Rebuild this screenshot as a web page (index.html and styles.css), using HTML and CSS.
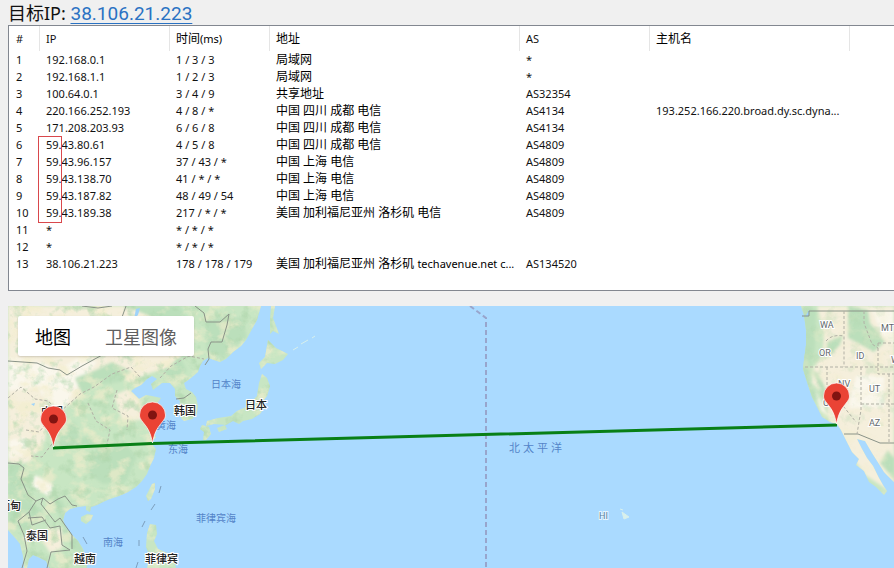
FILE: index.html
```html
<!DOCTYPE html>
<html lang="zh-CN">
<head>
<meta charset="utf-8">
<title>目标IP</title>
<link rel="stylesheet" href="styles.css">
</head>
<body>
<h1 class="target">目标IP: <a class="target-link" href="#map">38.106.21.223</a></h1>
<div class="panel">
<table class="hops">
<colgroup><col class="c-num"><col class="c-ip"><col class="c-time"><col class="c-addr"><col class="c-as"><col class="c-host"><col></colgroup>
<thead><tr><th>#</th><th>IP</th><th class="zh">时间<span class="ms">(ms)</span></th><th class="zh">地址</th><th>AS</th><th class="zh">主机名</th><th></th></tr></thead>
<tbody>
<tr><td>1</td><td>192.168.0.1</td><td>1 / 3 / 3</td><td class="zh">局域网</td><td>*</td><td></td><td></td></tr>
<tr><td>2</td><td>192.168.1.1</td><td>1 / 2 / 3</td><td class="zh">局域网</td><td>*</td><td></td><td></td></tr>
<tr><td>3</td><td>100.64.0.1</td><td>3 / 4 / 9</td><td class="zh">共享地址</td><td>AS32354</td><td></td><td></td></tr>
<tr><td>4</td><td>220.166.252.193</td><td>4 / 8 / *</td><td class="zh">中国 四川 成都 电信</td><td>AS4134</td><td>193.252.166.220.broad.dy.sc.dyna...</td><td></td></tr>
<tr><td>5</td><td>171.208.203.93</td><td>6 / 6 / 8</td><td class="zh">中国 四川 成都 电信</td><td>AS4134</td><td></td><td></td></tr>
<tr><td>6</td><td class="marked">59.43.80.61<span class="mark-box"></span></td><td>4 / 5 / 8</td><td class="zh">中国 四川 成都 电信</td><td>AS4809</td><td></td><td></td></tr>
<tr><td>7</td><td>59.43.96.157</td><td>37 / 43 / *</td><td class="zh">中国 上海 电信</td><td>AS4809</td><td></td><td></td></tr>
<tr><td>8</td><td>59.43.138.70</td><td>41 / * / *</td><td class="zh">中国 上海 电信</td><td>AS4809</td><td></td><td></td></tr>
<tr><td>9</td><td>59.43.187.82</td><td>48 / 49 / 54</td><td class="zh">中国 上海 电信</td><td>AS4809</td><td></td><td></td></tr>
<tr><td>10</td><td>59.43.189.38</td><td>217 / * / *</td><td class="zh">美国 加利福尼亚州 洛杉矶 电信</td><td>AS4809</td><td></td><td></td></tr>
<tr><td>11</td><td>*</td><td>* / * / *</td><td></td><td></td><td></td><td></td></tr>
<tr><td>12</td><td>*</td><td>* / * / *</td><td></td><td></td><td></td><td></td></tr>
<tr><td>13</td><td>38.106.21.223</td><td>178 / 178 / 179</td><td class="zh">美国 加利福尼亚州 洛杉矶 <span class="latin">techavenue.net c...</span></td><td>AS134520</td><td></td><td></td></tr>
</tbody>
</table>
</div>
<main class="map" id="map">
<svg class="map-art" viewBox="8 306 886 262" preserveAspectRatio="xMinYMin slice" role="img" aria-label="路由地图">
<defs>
<path id="asia" d="M8 306H261L257 320 251 331 246 340 241 346 233 352 226 359 220 362 214 360 208 358 203 361 200 366 198 372 191 378 184 383 186 389 192 392 196 397 198 406 197 414 192 419 184 421 181 418 182 411 179 406 180 401 175 396 175 389 170 383 162 383 153 390 151 384 157 379 152 376 147 379 141 385 135 388 131 391 135 395 139 399 146 395 152 396 161 398 156 405 148 412 146 418 150 427 156 437 151 443 156 449 154 458 150 466 147 474 142 481 136 487 128 492 119 496 110 499 103 502 97 505 91 507 90 512 86 510 86 506 78 507 70 509 65 513 63 520 66 528 72 535 78 541 83 549 86 559 87 568H49L46 561 40 558 33 555 29 559 27 568H24L23 556 20 544 16 539 8 530Z"/>
<path id="america" d="M801 306L804 315 806 330 806 345 804 360 803 369 807 382 812 397 816 405 822 417 830 422 837 424 841 430 846 440 852 452 859 459 856 465 864 471 869 482 876 487 884 495 887 491 883 485 879 478 873 466 867 458 862 449 857 439 865 441 872 453 879 464 884 472 894 482V306Z"/>
<path id="islands" d="M271 306H275L273 318 279 334 273 331 270 334V318ZM268 340L276 348 288 354 283 360 275 364 267 363 261 369 259 363 265 357ZM262 374L267 378 270 386 267 396 263 401 264 408 260 414 252 419 243 421 239 424 233 421 226 425 214 424 206 426 207 421 218 418 231 416 237 411 246 407 257 396 259 383ZM217 428L225 425 227 429 219 432ZM202 425L209 427 211 434 206 440 203 440 204 432 200 429ZM81 517L87 514 93 515 91 520 86 524 81 521ZM155 483L152 484 146 496 148 501 151 499 155 489ZM150 524L156 525 157 534 154 541 158 549 167 553 174 561 176 568H147L150 557 146 547 147 533Z"/>
<clipPath id="land"><use href="#asia"/><use href="#america"/><use href="#islands"/></clipPath>
<filter id="sand-grain" x="0" y="0" width="1" height="1" color-interpolation-filters="sRGB"><feTurbulence type="fractalNoise" baseFrequency=".055 .07" numOctaves="4" seed="8"/><feColorMatrix values="0 0 0 0 .95  0 0 0 0 .93  0 0 0 0 .8  4 0 0 0 -1.9"/></filter>
<filter id="leaf-grain" x="0" y="0" width="1" height="1" color-interpolation-filters="sRGB"><feTurbulence type="fractalNoise" baseFrequency=".08" numOctaves="4" seed="21"/><feColorMatrix values="0 0 0 0 .69  0 0 0 0 .84  0 0 0 0 .68  0 4 0 0 -2.1"/></filter>
<filter id="soft"><feGaussianBlur stdDeviation="1.5"/></filter>
<g id="pin"><path d="M0 0C-2-10-4-14-9-20C-12-24-13-25-13-28A13 13 0 0 1 13-28C13-25 12-24 9-20C4-14 2-10 0 0Z" fill="#ea4335" stroke="#fff" stroke-opacity=".7" stroke-width="1"/><circle cy="-28" r="4.500" fill="#811411"/></g>
</defs>
<rect class="sea" x="8" y="306" width="886" height="262"/>
<g clip-path="url(#land)">
<rect class="green" x="8" y="306" width="886" height="262"/>
<g filter="url(#soft)">
<path class="sand" d="M8 306H145L185 340 178 365 150 373 130 382 115 374 84 391 70 405 48 410 45 440 30 462 8 466Z"/>
<path class="cream" d="M8 357L35 361 60 369 82 356 97 362 75 390 64 410 48 405 38 387 8 391ZM8 440L26 438 27 454 8 458ZM35 475L53 484 50 497 32 486Z"/>
<path class="leaf" d="M75 378L96 370 112 362 132 372 120 382 97 385 82 394ZM126 306H180L190 324 178 335 158 320ZM205 317L242 318 247 337 222 356 207 352ZM163 370L180 357 187 371 169 383ZM55 426L75 422 80 438 98 436 96 444 62 449ZM8 462L25 465 26 500 43 511 32 530 8 525ZM98 447L124 442 137 457 126 482 103 484 85 471ZM53 501L62 500 85 553 73 550Z"/>
<path class="sand" d="M47 530L62 528 62 548 50 553 42 540ZM114 395L128 389 139 399 142 420 122 420Z"/>
<path class="sand" d="M817 306H894V484L888 490 865 475 840 440 830 423 824 394 812 383 813 369 823 353 824 333Z"/>
<path class="leaf" d="M802 306L816 310 815 350 808 381 820 398 812 402 800 366ZM848 306L868 310 870 323 885 342 874 352 848 338ZM827 342L843 335 840 345 826 359ZM812 370L818 373 832 402 828 407ZM888 450L894 458V480L880 463Z"/>
<path class="cream" d="M856 376H884V407L848 409ZM872 310L894 311V344L882 335ZM815 390L829 416 821 411Z"/>
</g>
<rect class="grain" x="8" y="306" width="280" height="262" filter="url(#sand-grain)"/>
<rect class="grain" x="8" y="306" width="280" height="262" filter="url(#leaf-grain)"/>
<rect class="grain-light" x="798" y="306" width="96" height="190" filter="url(#sand-grain)"/>
<rect class="grain-light" x="798" y="306" width="96" height="120" filter="url(#leaf-grain)"/>
</g>
<path class="lake" d="M136 309L140 308 138 315 134 319ZM31 404L35 403 34 406ZM809 310V316L805 317Z"/>
<path class="border" d="M8 361L37 363 48 368 60 370 67 375 82 366 93 360 104 354M82 306L98 308 112 306M126 306L121 320M195 306L204 313 206 322 220 322 229 314 227 325 222 342 211 342 208 349 209 359 205 365M176 399L184 398 191 393M8 463L19 464 24 468 21 479 28 495 36 501 29 512 18 521 24 535 27 551 22 568M36 501L43 498 50 504 58 499 65 496 72 505 77 506M43 498L41 504 55 522 60 518 72 535 72 549M28 518L42 517 50 528 60 526 62 545 70 550 51 552 47 568M29 512L32 525 46 520M809 311H894M844 434L858 434 880 443H894M802 316H809V311"/>
<path class="state" d="M8 398L21 387 35 399 48 401 60 412 80 394 94 387 112 374 131 367 140 377M52 417L39 432 26 430M55 440L42 457 31 456M88 403L96 421 110 430 106 449M117 390L112 408 128 416 127 430M160 378L171 366 189 356 204 359M826 341Q832 334 844 336V367M805 367H894M827 367V386L856 422M861 367V410L857 434M878 343V374H894M878 343H894M861 404H894M844 311V336M864 311V323L872 344 878 348M889 374V443"/>
<path class="tiny" d="M293 350L298 347M301 344L308 340M312 338L315 336M620 509L623 510M622 512L629 517 624 519Z"/>
<path class="sea-line" d="M161 486L159 493M155 504L151 510M145 521L142 527M83 537L87 544M139 540V546M138 562L136 568"/>
<path class="dateline" d="M470 306L486 318V568"/>
<g class="country"><text x="174" y="415">韩国</text><text x="245" y="409">日本</text><text x="41" y="416">中国</text><text x="-1" y="510">缅甸</text><text x="26" y="540">泰国</text><text x="74" y="563">越南</text><text x="145" y="563">菲律宾</text></g>
<g class="water-name"><text x="211" y="388">日本海</text><text x="156" y="429">黄海</text><text x="168" y="453">东海</text><text x="196" y="522">菲律宾海</text><text x="103" y="546">南海</text></g>
<text class="ocean" x="509" y="452">北太平洋</text>
<g class="state-name"><text x="820" y="328">WA</text><text x="819" y="356">OR</text><text x="856" y="359">ID</text><text x="881" y="331">MT</text><text x="838" y="387">NV</text><text x="869" y="392">UT</text><text x="869" y="426">AZ</text><text x="823" y="406">CA</text><text x="891" y="363">WY</text></g>
<text class="hawaii" x="599" y="519">HI</text>
<path class="route" d="M53 448L152 443.500 837 425"/>
<use href="#pin" x="53.500" y="447"/><use href="#pin" x="152.500" y="443"/><use href="#pin" x="836.500" y="424"/>
</svg>
<div class="map-type"><button class="type-button active" type="button">地图</button><button class="type-button" type="button">卫星图像</button></div>
</main>
</body>
</html>
```
FILE: styles.css
```css
* { box-sizing: border-box; }
body {
  margin: 0;
  padding-left: 8px;
  height: 100vh;
  display: flex;
  flex-direction: column;
  overflow: hidden;
  background: #f0f0f0;
  color: #111;
  font-family: "Noto Sans", "Noto Sans CJK SC", sans-serif;
}
.target {
  margin: 0;
  height: 25px;
  font: 400 18px/26px "Noto Sans", "Noto Sans CJK SC", sans-serif;
  flex: none;
}
.target-link {
  color: #2a72c3;
  font-family: Roboto, sans-serif;
  font-size: 19px;
  text-decoration-thickness: 1px;
  text-underline-offset: 3px;
}
.panel {
  flex: none;
  background: #fff;
  border: 1px solid #828790;
  border-right: 0;
  padding-bottom: 18px;
  margin-bottom: 15px;
  overflow: hidden;
}
.hops {
  width: 100%;
  table-layout: fixed;
  border-collapse: separate;
  border-spacing: 0;
  font-size: 11px;
  line-height: 17px;
}
.c-num { width: 31px; }
.c-ip { width: 130px; }
.c-time { width: 100px; }
.c-addr { width: 250px; }
.c-as { width: 130px; }
.c-host { width: 200px; }
th, td {
  height: 17px;
  padding: 0 0 0 6px;
  text-align: left;
  font-weight: 400;
  white-space: nowrap;
}
th {
  height: 25px;
  border-right: 1px solid #e5e5e5;
}
th:first-child, td:first-child { padding-left: 7px; }
th:last-child { border-right: 0; }
.zh { font-size: 12px; color: #000; }
.latin, .ms { font-size: 11px; }
.marked { position: relative; }
.mark-box {
  position: absolute;
  left: -2px;
  top: 0;
  width: 24px;
  height: 87px;
  border: 1px solid #d9484c;
}
.map {
  position: relative;
  flex: 1;
  min-height: 0;
  background: #aadaff;
  overflow: hidden;
}
.map-art { display: block; width: 100%; height: 100%; }
.map-type {
  position: absolute;
  left: 10px;
  top: 10px;
  display: flex;
  background: #fff;
  border-radius: 2px;
  box-shadow: 0 1px 2px rgba(0, 0, 0, .15);
}
.type-button {
  height: 40px;
  padding: 0 17px;
  border: 0;
  background: none;
  color: #606060;
  font: 400 18px/40px "Noto Sans CJK SC", sans-serif;
}
.type-button.active { color: #000; }
.sea { fill: #aadaff; }
.green { fill: #c8e6c3; }
.sand { fill: #f5efdc; }
.cream { fill: #faf7ec; }
.leaf { fill: #bbdfbb; }
.lake { fill: #9fd3fa; }
.grain { opacity: .65; }
.grain-light { opacity: .3; }
.border { fill: none; stroke: #8a9388; stroke-width: 1; }
.state { fill: none; stroke: #b1b0a5; stroke-width: 1; stroke-dasharray: 3 2; }
.tiny { fill: #d8f0ec; stroke: #d8f0ec; stroke-width: 1; }
.sea-line { fill: none; stroke: #7d9ebd; stroke-width: 1; }
.dateline { fill: none; stroke: #98a5cc; stroke-width: 2; stroke-dasharray: 5 3; }
.route { fill: none; stroke: #087f16; stroke-width: 3; }
.country { font: 500 11px "Noto Sans CJK SC", sans-serif; fill: #222; stroke: #fff; stroke-width: 2; paint-order: stroke; }
.water-name { font: 10px "Noto Sans CJK SC", sans-serif; fill: #5484c8; }
.ocean { font: 11px "Noto Sans CJK SC", sans-serif; letter-spacing: 3px; fill: #5484c8; }
.state-name { font: 9px Roboto, sans-serif; fill: #62686c; stroke: #fff; stroke-width: 2; paint-order: stroke; }
.hawaii { font: 9px Roboto, sans-serif; fill: #5b7f9e; stroke: #e5f5ff; stroke-width: 2; paint-order: stroke; }
```
